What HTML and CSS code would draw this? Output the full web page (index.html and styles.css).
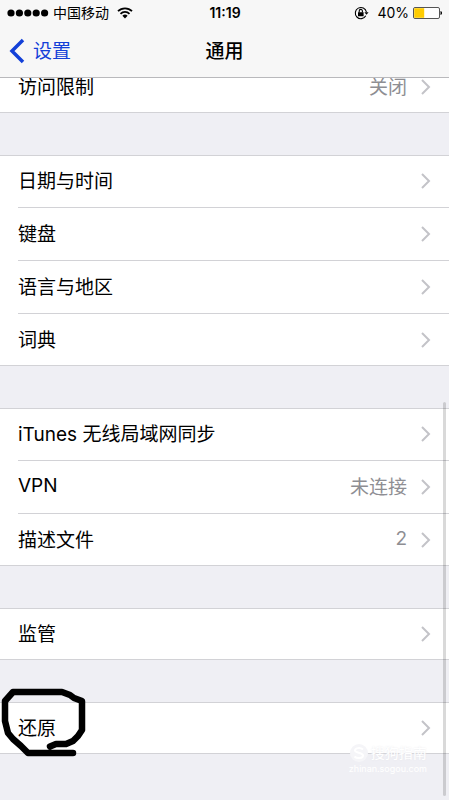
FILE: index.html
```html
<!DOCTYPE html>
<html lang="zh-CN">
<head>
<meta charset="utf-8">
<meta name="viewport" content="width=device-width, initial-scale=1">
<title>通用</title>
<link rel="stylesheet" href="styles.css">
</head>
<body>
<svg class="sprite">
  <symbol id="chevron" viewBox="0 0 10 16"><path d="M1 1l7 7-7 7" fill="none" stroke="#c3c3c8" stroke-width="2"/></symbol>
</svg>
<header class="header">
  <div class="status">
    <div class="carrier">
      <svg class="signal" width="42" height="8" viewBox="0 0 42 8"><circle cx="4" cy="4" r="3.6"/><circle cx="12.4" cy="4" r="3.6"/><circle cx="20.8" cy="4" r="3.6"/><circle cx="29.2" cy="4" r="3.6"/><circle cx="37.6" cy="4" r="3.6"/></svg>
      <span>中国移动</span>
      <svg class="wifi" width="16" height="12" viewBox="0 0 16 12"><path d="M1 4.2a10 10 0 0 1 14 0M3.5 6.8a6.4 6.4 0 0 1 9 0" fill="none" stroke="#000" stroke-width="1.8"/><path d="M5.4 8.8a3.7 3.7 0 0 1 5.2 0L8 11.4z"/></svg>
    </div>
    <time class="clock">11:19</time>
    <div class="power">
      <svg width="15" height="14" viewBox="0 0 15 14"><path d="M11.8 9.8A5.6 5.6 0 1 1 12.4 6" fill="none" stroke="#000" stroke-width="1.1"/><path d="M10.4 6.2h4.2l-2.1 2.6zM4 6.2h5.6v4H4z"/><path d="M5.2 6.4V5a1.6 1.6 0 0 1 3.2 0v1.4" fill="none" stroke="#000" stroke-width="1.1"/></svg>
      <span class="percent">40%</span>
      <svg width="30" height="12" viewBox="0 0 30 12"><rect x=".5" y=".5" width="26" height="11" rx="1.5" fill="#fff" stroke="#555"/><path d="M1.2 1.2h10v9.6h-10z" fill="#fc0"/><path d="M27.500 4c2 .5 2 3.500 0 4z"/></svg>
    </div>
  </div>
  <nav class="nav">
    <a class="back" href="#"><svg width="16" height="26" viewBox="0 0 16 26"><path d="M14 2L3 13l11 11" fill="none" stroke="#1340d8" stroke-width="3.500"/></svg><span>设置</span></a>
    <h1 class="title">通用</h1>
  </nav>
</header>
<main class="content">
  <ul class="group">
    <li><a class="row" href="#"><span>访问限制</span><span class="value">关闭</span><svg class="chevron"><use href="#chevron"/></svg></a></li>
  </ul>
  <ul class="group">
    <li><a class="row" href="#"><span>日期与时间</span><svg class="chevron"><use href="#chevron"/></svg></a></li>
    <li><a class="row" href="#"><span>键盘</span><svg class="chevron"><use href="#chevron"/></svg></a></li>
    <li><a class="row" href="#"><span>语言与地区</span><svg class="chevron"><use href="#chevron"/></svg></a></li>
    <li><a class="row" href="#"><span>词典</span><svg class="chevron"><use href="#chevron"/></svg></a></li>
  </ul>
  <ul class="group">
    <li><a class="row" href="#"><span>iTunes 无线局域网同步</span><svg class="chevron"><use href="#chevron"/></svg></a></li>
    <li><a class="row" href="#"><span>VPN</span><span class="value">未连接</span><svg class="chevron"><use href="#chevron"/></svg></a></li>
    <li><a class="row" href="#"><span>描述文件</span><span class="value">2</span><svg class="chevron"><use href="#chevron"/></svg></a></li>
  </ul>
  <ul class="group">
    <li><a class="row" href="#"><span>监管</span><svg class="chevron"><use href="#chevron"/></svg></a></li>
  </ul>
  <ul class="group">
    <li><a class="row" href="#"><span>还原</span><svg class="chevron"><use href="#chevron"/></svg></a>
      <svg class="marker" width="90" height="70" viewBox="0 0 90 70"><path d="M50 59.500L56 57h10l7-3 5-5 4-6V14l-8-3-4-3-8-3H13L5 14v20l3 12 5 6 8 7 7 7h45" fill="none" stroke="#000" stroke-width="6.500" stroke-linecap="round" stroke-linejoin="round"/></svg>
      <div class="watermark">
        <svg width="20" height="20" viewBox="0 0 20 20"><circle cx="10" cy="10" r="9" fill="#f5f5f8"/><path d="M14 6.500C11 4 6 5 6 7.500s8 2 8 5-6 3.500-8.500 1" fill="none" stroke="#fff" stroke-width="2"/></svg>
        <span class="brand">搜狗指南</span>
        <span class="site">zhinan.sogou.com</span>
      </div>
    </li>
  </ul>
  <div class="scrollbar"></div>
</main>
</body>
</html>
```
FILE: styles.css
```css
* {
  box-sizing: border-box;
}

body {
  margin: 0;
  min-height: 100vh;
  display: flex;
  flex-direction: column;
  background: #efeff4;
  color: #000;
  font-family: Inter, "Noto Sans CJK SC", sans-serif;
  font-size: 19px;
}

a {
  color: inherit;
  text-decoration: none;
}

svg {
  flex: none;
}

.sprite {
  display: none;
}

.header {
  position: relative;
  z-index: 1;
  background: #f7f7f7;
  border-bottom: 1px solid #b9b9bc;
}

.status {
  display: grid;
  grid-template-columns: 1fr auto 1fr;
  align-items: center;
  height: 25px;
  padding: 0 6px 0 7px;
  font-size: 14px;
}

.carrier,
.power {
  display: flex;
  align-items: center;
  gap: 4px;
}

.carrier span {
  padding-bottom: 2px;
}

.wifi {
  margin-left: 4px;
}

.power {
  justify-content: flex-end;
}

.power .percent {
  margin-left: 4px;
}

.clock {
  font-weight: 600;
}

.nav {
  display: grid;
  grid-template-columns: 1fr auto 1fr;
  align-items: center;
  height: 52px;
  padding: 0 9px;
}

.back {
  display: flex;
  align-items: center;
  gap: 8px;
  color: #1340d8;
}

.back span,
.title,
.row span {
  padding-bottom: 3px;
}

.title {
  margin: 0;
  font-size: 19px;
  font-weight: 500;
}

.content {
  position: relative;
  flex: 1;
  margin-top: -17px;
}

.group {
  margin: 0 0 42px;
  padding: 0;
  list-style: none;
  background: #fff;
  box-shadow: inset 0 1px #d2d2d6, inset 0 -1px #d2d2d6;
}

.group li {
  position: relative;
}

.group li + li::before {
  content: "";
  display: block;
  height: 1px;
  margin-left: 18px;
  background: #d2d2d6;
}

.row {
  display: flex;
  align-items: center;
  height: 52px;
  padding: 0 18px;
}

.value {
  margin-left: auto;
  color: #8e8e93;
}

.chevron {
  width: 10px;
  height: 16px;
  margin-left: auto;
}

.value + .chevron {
  margin-left: 14px;
}

.marker {
  position: absolute;
  top: -15px;
  left: 0;
}

.watermark {
  position: absolute;
  top: 41px;
  right: 22px;
  display: grid;
  grid-template-columns: 20px auto;
  column-gap: 2px;
  align-items: center;
  color: #fff;
  line-height: 20px;
}

.brand {
  font-size: 14px;
  text-shadow: 0 0 2px #e6e6ea;
}

.site {
  grid-column: 1 / -1;
  font-size: 9px;
  line-height: 12px;
}

.scrollbar {
  position: absolute;
  right: 3px;
  bottom: 4px;
  width: 3px;
  height: 394px;
  border-radius: 2px;
  background: rgba(0, 0, 0, 0.15);
}
```
